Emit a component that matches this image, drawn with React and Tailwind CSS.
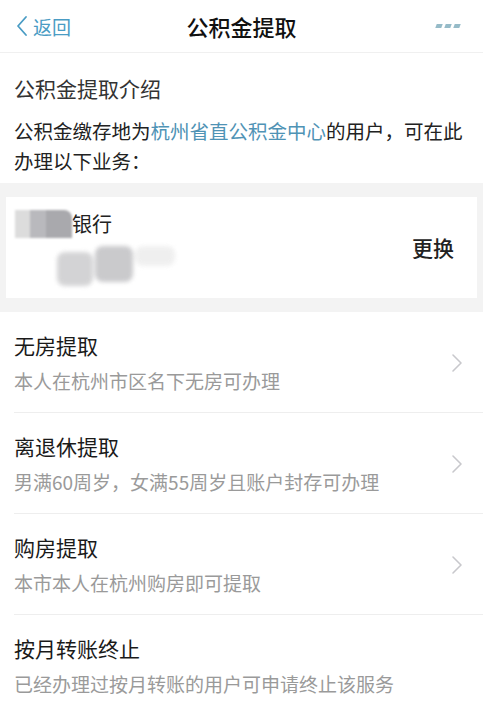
import React from "react";

const items = [
  { title: "无房提取", desc: "本人在杭州市区名下无房可办理", arrow: true },
  { title: "离退休提取", desc: "男满60周岁，女满55周岁且账户封存可办理", arrow: true },
  { title: "购房提取", desc: "本市本人在杭州购房即可提取", arrow: true },
  { title: "按月转账终止", desc: "已经办理过按月转账的用户可申请终止该服务", arrow: false },
];

function Chevron() {
  return (
    <svg width="12" height="20" viewBox="0 0 12 20" fill="none">
      <path d="M2 2l8 8-8 8" stroke="#c8c8cc" strokeWidth="1.6" strokeLinecap="round" strokeLinejoin="round" />
    </svg>
  );
}

export default function App() {
  return (
    <div
      className="w-[483px] h-[704px] overflow-hidden bg-white text-[#222]"
      style={{ fontFamily: '"Noto Sans CJK SC", "Noto Sans", sans-serif' }}
    >
      {/* 顶部导航 */}
      <div className="relative flex items-center h-[53px] border-b border-[#f0f0f0]">
        <div className="flex items-center pl-[16px] gap-[5px] text-[#4a9cc4]">
          <svg width="12" height="22" viewBox="0 0 12 22" fill="none">
            <path d="M10 2L2 11l8 9" stroke="#4a9cc4" strokeWidth="1.8" strokeLinecap="round" strokeLinejoin="round" />
          </svg>
          <span className="text-[19px] leading-none">返回</span>
        </div>
        <div className="absolute left-0 right-0 text-center text-[22px] font-medium text-[#111] pointer-events-none">
          公积金提取
        </div>
        <div className="ml-auto pr-[23px] flex gap-[3px] items-center opacity-70">
          <span className="w-[6px] h-[4px] bg-[#6a9fb2] skew-x-[-20deg]" />
          <span className="w-[6px] h-[4px] bg-[#6a9fb2] skew-x-[-20deg]" />
          <span className="w-[6px] h-[4px] bg-[#6a9fb2] skew-x-[-20deg]" />
        </div>
      </div>

      {/* 介绍 */}
      <div className="pl-[14px] pr-[10px] pt-[21px] pb-[7px]">
        <div className="text-[21px] leading-[28px] text-[#333]">公积金提取介绍</div>
        <p className="mt-[14px] text-[19.5px] leading-[30px] text-[#222]">
          公积金缴存地为<span className="text-[#4f93b5]">杭州省直公积金中心</span>的用户，可在此办理以下业务：
        </p>
      </div>

      {/* 银行卡 */}
      <div className="bg-[#f3f3f3] pt-[14px] pb-[14px] px-[6px]">
        <div className="bg-white h-[101px] flex items-center pl-[9px] pr-[23px]">
          <div className="flex flex-col">
            <div className="flex items-center">
              <div className="flex w-[57px] h-[28px] blur-[1px]">
                <div className="w-[15px] bg-[#dcdcdc]" />
                <div className="w-[16px] bg-[#b9b9bd]" />
                <div className="flex-1 bg-[#a9a9ad] rounded-tr-[8px]" />
              </div>
              <span className="text-[20px] leading-[28px] text-[#222]">银行</span>
            </div>
            <div className="mt-[8px] ml-[42px] flex items-start gap-[2px] blur-[2px] opacity-80">
              <div className="w-[36px] h-[34px] mt-[6px] bg-[#c9c9cb] rounded-[8px]" />
              <div className="w-[38px] h-[36px] bg-[#bdbdc0] rounded-[8px]" />
              <div className="w-[40px] h-[20px] bg-[#ececec] rounded-[8px]" />
            </div>
          </div>
          <div className="ml-auto text-[21px] font-medium text-[#222]">更换</div>
        </div>
      </div>

      {/* 列表 */}
      <div>
        {items.map((it, i) => (
          <div key={i}>
            <div className="flex items-center pl-[14px] pr-[20px] pt-[19px] pb-[18px]">
              <div className="flex-1">
                <div className="text-[21px] leading-[28px] text-[#1a1a1a]">{it.title}</div>
                <div className="mt-[9px] text-[19px] leading-[26px] text-[#9a9a9a]">{it.desc}</div>
              </div>
              {it.arrow && <Chevron />}
            </div>
            {i < items.length - 1 && <div className="ml-[14px] h-px bg-[#eeeeee]" />}
          </div>
        ))}
      </div>
    </div>
  );
}
